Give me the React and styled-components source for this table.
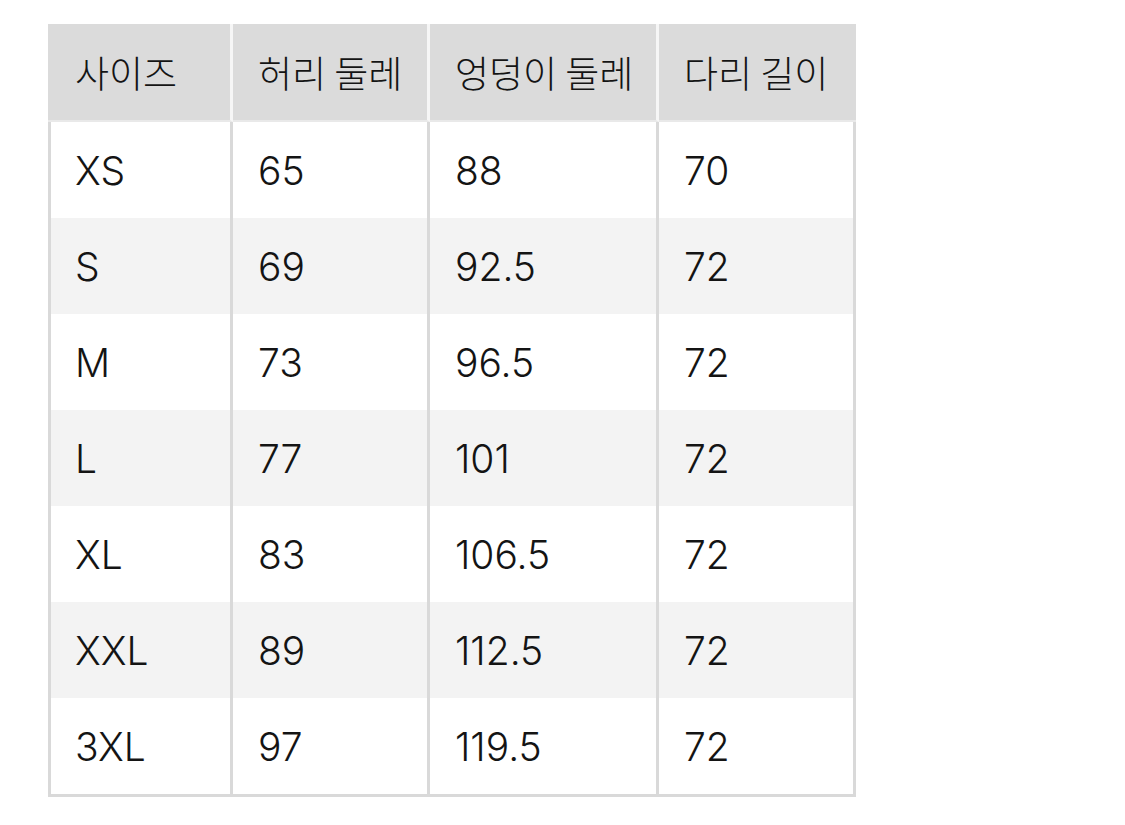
import React from 'react';
import styled, { createGlobalStyle } from 'styled-components';

const GlobalStyle = createGlobalStyle`
  html, body {
    margin: 0;
    padding: 0;
    background: #ffffff;
  }
  body {
    font-family: Inter, "Noto Sans CJK KR", sans-serif;
    color: #141414;
  }
`;

const Page = styled.div`
  padding: 24px 0 0 48px;
`;

const Table = styled.table`
  border-collapse: separate;
  border-spacing: 0;
  table-layout: fixed;
  width: 808px;
`;

const HeadCell = styled.th`
  box-sizing: border-box;
  width: ${(p) => p.$w}px;
  height: 98px;
  padding: 0 0 0 ${(p) => (p.$first ? 27 : 25)}px;
  background: #dbdbdb;
  border-right: ${(p) => (p.$last ? 'none' : '3px solid #f6f6f6')};
  border-bottom: 2px solid #e9e9e9;
  text-align: left;
  vertical-align: middle;
  font-family: "Noto Sans CJK KR", Inter, sans-serif;
  font-size: 37px;
  font-weight: 300;
  color: #141414;
  white-space: nowrap;
`;

const Row = styled.tr`
  background: ${(p) => (p.$alt ? '#f3f3f3' : '#ffffff')};
`;

const Cell = styled.td`
  box-sizing: border-box;
  height: ${(p) => (p.$bottom ? 99 : 96)}px;
  padding: 0 0 0 ${(p) => (p.$first ? 24 : 25)}px;
  border-left: ${(p) => (p.$first ? '3px solid #d9d9d9' : 'none')};
  border-right: 3px solid #d9d9d9;
  border-bottom: ${(p) => (p.$bottom ? '3px solid #d9d9d9' : 'none')};
  vertical-align: middle;
  font-size: 39px;
  font-weight: 300;
  white-space: nowrap;
`;

const columns = [
  { label: '사이즈', w: 185 },
  { label: '허리 둘레', w: 197 },
  { label: '엉덩이 둘레', w: 229 },
  { label: '다리 길이', w: 197 },
];

const rows = [
  ['XS', '65', '88', '70'],
  ['S', '69', '92.5', '72'],
  ['M', '73', '96.5', '72'],
  ['L', '77', '101', '72'],
  ['XL', '83', '106.5', '72'],
  ['XXL', '89', '112.5', '72'],
  ['3XL', '97', '119.5', '72'],
];

function App() {
  return (
    <Page>
      <GlobalStyle />
      <Table>
        <thead>
          <tr>
            {columns.map((c, i) => (
              <HeadCell
                key={c.label}
                $w={c.w}
                $first={i === 0}
                $last={i === columns.length - 1}
              >
                {c.label}
              </HeadCell>
            ))}
          </tr>
        </thead>
        <tbody>
          {rows.map((r, ri) => (
            <Row key={r[0]} $alt={ri % 2 === 1}>
              {r.map((v, ci) => (
                <Cell key={ci} $first={ci === 0} $bottom={ri === rows.length - 1}>
                  {v}
                </Cell>
              ))}
            </Row>
          ))}
        </tbody>
      </Table>
    </Page>
  );
}

export default App;
